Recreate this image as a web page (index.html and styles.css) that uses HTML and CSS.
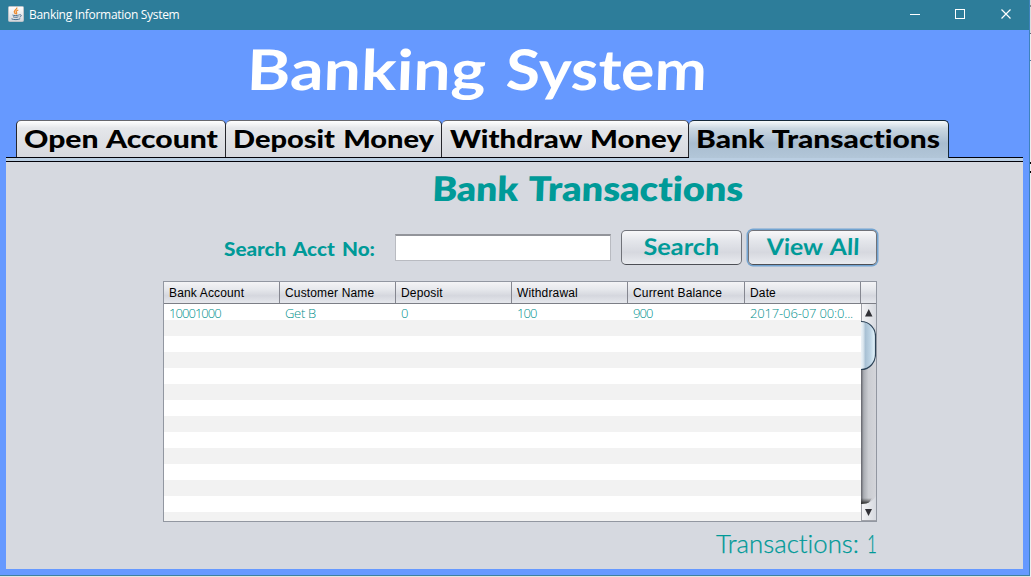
FILE: index.html
```html
<!DOCTYPE html>
<html lang="en">
<head>
<meta charset="utf-8">
<title>Banking Information System</title>
<link rel="stylesheet" href="styles.css">
</head>
<body>
<div class="desktop">
<div class="window">
  <header class="titlebar">
    <svg class="java" width="16" height="16" viewBox="0 0 16 16">
      <defs><linearGradient id="tile" x2="0" y2="1"><stop stop-color="#fff"/><stop offset="1" stop-color="#d3d7dc"/></linearGradient></defs>
      <rect x=".5" y=".5" width="15" height="15" rx="1" fill="url(#tile)" stroke="#b9c3c9"/>
      <path d="M8.8 1.5C9.5 3.5 5 4.5 6.5 6.6L7.6 8M10.3 4C7.7 5 7.8 5.8 8.6 6.7 9 7.3 8.7 7.7 8 8.2" fill="none" stroke="#ed8b2f" stroke-width="1.3"/>
      <path d="M4.5 9C5.7 9.8 9 9.6 10.8 9M5.1 10.8C6.700 11.500 9 11.400 10.400 10.800M3.500 12.800C5.500 14 10.500 13.800 12.200 12.700M11.300 8.800C14 8.300 13.800 10.600 11.600 11" fill="none" stroke="#496f8f"/>
    </svg>
    <span class="caption">Banking Information System</span>
    <svg class="controls" width="102" height="12" viewBox="0 0 102 12" fill="none" stroke="#fff">
      <path d="M0 6.500H10M45.500 1.500H54.500V10.500H45.500Z" shape-rendering="crispEdges"/>
      <path d="M91.500 1.500L100.500 10.500M100.500 1.500L91.500 10.500" stroke-width="1.200"/>
    </svg>
  </header>
  <main class="frame">
    <h1 class="banner"><svg width="470" height="70"><g class="display title"><text x="11" y="50" textLength="239" lengthAdjust="spacingAndGlyphs">Banking</text> <text x="270" y="50" textLength="201" lengthAdjust="spacingAndGlyphs">System</text></g></svg></h1>
    <nav class="tabs">
      <div class="tab t1"><svg width="210" height="36"><text class="display tabtext" x="7" y="27" textLength="194" lengthAdjust="spacingAndGlyphs">Open Account</text></svg></div>
      <div class="tab t2"><svg width="216" height="36"><text class="display tabtext" x="7" y="27" textLength="201" lengthAdjust="spacingAndGlyphs">Deposit Money</text></svg></div>
      <div class="tab t3"><svg width="247" height="36"><text class="display tabtext" x="8" y="27" textLength="232" lengthAdjust="spacingAndGlyphs">Withdraw Money</text></svg></div>
      <div class="tab t4 selected"><svg width="259" height="36"><text class="display tabtext" x="7" y="27" textLength="244" lengthAdjust="spacingAndGlyphs">Bank Transactions</text></svg></div>
    </nav>
    <section class="panel">
      <h2 class="heading"><svg width="320" height="42"><g class="display subtitle"><text x="4" y="31" textLength="86" lengthAdjust="spacingAndGlyphs">Bank</text> <text x="100" y="31" textLength="215" lengthAdjust="spacingAndGlyphs">Transactions</text></g></svg></h2>
      <div class="search">
        <svg class="label" width="155" height="30"><text class="display labeltext" x="1" y="21" textLength="151" lengthAdjust="spacingAndGlyphs">Search Acct No:</text></svg>
        <input class="field" type="text" aria-label="Account number">
        <button class="btn find"><svg width="119" height="33"><text class="display btntext" x="21" y="24" textLength="76" lengthAdjust="spacingAndGlyphs">Search</text></svg></button>
        <button class="btn all"><svg width="127" height="33"><text class="display btntext" x="17" y="24" textLength="93" lengthAdjust="spacingAndGlyphs">View All</text></svg></button>
      </div>
      <div class="table">
        <div class="row head"><span>Bank Account</span><span>Customer Name</span><span>Deposit</span><span>Withdrawal</span><span>Current Balance</span><span>Date</span><i></i></div>
        <div class="content">
          <div class="rows"><div class="row data"><span>10001000</span><span class="name">Get B</span><span>0</span><span>100</span><span>900</span><span class="date">2017-06-07 00:0...</span></div></div>
          <svg class="scroll" width="15" height="217" viewBox="0 0 15 217">
            <defs>
              <linearGradient id="track"><stop stop-color="#606168"/><stop offset=".18" stop-color="#aaadb3"/><stop offset=".5" stop-color="#cbcdd2"/><stop offset="1" stop-color="#d4d5da"/></linearGradient>
              <linearGradient id="thumb"><stop stop-color="#f4f8fb"/><stop offset=".2" stop-color="#dce7ef"/><stop offset=".35" stop-color="#a9c1d4"/><stop offset=".65" stop-color="#bcd3e4"/><stop offset="1" stop-color="#e8f8ff"/></linearGradient>
              <linearGradient id="end"><stop stop-color="#f5f5f7"/><stop offset="1" stop-color="#d7dae0"/></linearGradient>
              <linearGradient id="shade" x2="0" y2="1"><stop stop-color="#333" stop-opacity="0"/><stop offset="1" stop-color="#222"/></linearGradient>
            </defs>
            <path d="M0 0H15V217H0Z" fill="url(#track)"/>
            <path d="M0 0H15V24L0 18Z" fill="url(#end)"/>
            <path d="M4 12.500H11.500L7.750 5Z" fill="#303036"/>
            <path d="M-1 17.500H0C9 17.500 14.500 25 14.500 32V50C14.500 58 9 65.500 0 65.500H-1Z" fill="url(#thumb)" stroke="#2c4256" stroke-width="1.200"/>
            <path d="M0 194H11L7 200H0Z" fill="url(#shade)"/>
            <path d="M0 200C8 200 12 197 15 192V217H0Z" fill="url(#end)"/>
            <path d="M4 205H11L7.500 212Z" fill="#303036"/>
            <path d="M.5 0V17M.5 200V217M0 216.500H15" stroke="#a0a2a9"/>
          </svg>
        </div>
      </div>
      <div class="summary"><svg width="170" height="34"><text class="display count" x="7" y="24" textLength="143" lengthAdjust="spacingAndGlyphs">Transactions:</text> <text class="display count" x="158" y="24" textLength="10" lengthAdjust="spacingAndGlyphs">1</text></svg></div>
    </section>
  </main>
</div>
<aside class="edge"></aside>
</div>
</body>
</html>
```
FILE: styles.css
```css
* { box-sizing: border-box; }
body { margin: 0; background: #e4e4e4; overflow: hidden; }
.desktop { display: flex; width: 1031px; height: 577px; }
.window { width: 1030px; height: 576px; background: #69f; border-right: 1px solid #3d81bd; border-bottom: 1px solid #3d819f; }
.edge { width: 1px; height: 577px; background: linear-gradient(#d8d8d8 0 5px, #888 5px 7px, #ddd 7px 33px, #667 33px 34px, #eee 34px 60px, #57779c 60px 61px, #eee 61px 162px, #000 162px 164px, #eee 164px 171px, #000 171px 173px, #eee 173px); }
.titlebar { display: flex; align-items: center; height: 30px; padding: 0 17px 2px 8px; background: #2d7d9a; color: #fff; }
.caption { margin: 2px 0 0 5px; font: 12px/18px "Open Sans", sans-serif; letter-spacing: -.3px; }
.controls { margin-left: auto; }
svg { display: block; overflow: visible; }
.scroll { overflow: hidden; }
h1, h2 { margin: 0; }
.display { font-family: Lato, sans-serif; font-variant-ligatures: none; }
.frame { display: flex; flex-direction: column; height: 545px; padding: 0 6px 6px; }
.banner { height: 90px; padding: 10px 0 0 229px; }
.title { font-size: 56px; font-weight: 700; fill: #fff; transform: translateX(2px) skewX(-2deg); }
.tabs { display: flex; height: 42px; padding-left: 10px; background: linear-gradient(transparent 0 37px, #02020a 37px 38px, #bacee2 38px 41px, #02020a 41px); }
.tab { height: 37px; border: 1px solid #25262c; border-top-color: #66676d; border-bottom: 0; border-left-width: 0; border-radius: 5px 5px 0 0; background: linear-gradient(#fff, #e5e7ea 20%, #d6d8df); }
.t1 { width: 210px; border-left-width: 1px; }
.t2 { width: 216px; }
.t3 { width: 247px; }
.t4 { width: 260px; }
.selected { height: 38px; border-color: #152a3b; background: linear-gradient(#f6fafc, #cbd8e2 20%, #a9bdd0 60%, #b2c6d8); }
.tabtext { font-size: 24px; font-weight: 900; fill: #000; word-spacing: 1px; }
.panel { flex: 1; background: #d6d9e0; }
.heading { height: 67px; padding: 8px 0 0 422px; }
.subtitle { font-size: 34px; font-weight: 800; fill: #009a98; transform: translateX(1px) skewX(-2deg); }
.search { display: flex; height: 37px; padding-left: 217px; }
.label { margin-top: 6px; }
.labeltext { font-size: 18px; font-weight: 900; fill: #009a98; word-spacing: 2px; }
.field { width: 216px; height: 27px; margin: 5px 0 0 17px; padding: 0 5px; border: 1px solid #b9bbc1; border-top: 2px solid #92949a; background: #fff; }
.btn { height: 35px; margin: 1px 0 0; padding: 0; border: 1px solid #707279; border-bottom-color: #4d4f55; border-radius: 5px; background: linear-gradient(#f8f8fa, #e4e6eb 30%, #d6d8df 65%, #e9ebef); }
.find { width: 121px; margin-left: 10px; }
.all { width: 129px; margin-left: 6px; box-shadow: 0 0 0 1.5px #73a4d1; }
.btntext { font-size: 23px; font-weight: 700; fill: #009a98; word-spacing: 2px; transform: translateX(1px) skewX(-2deg); }
.table { width: 714px; height: 241px; margin: 15px 0 0 157px; border: 1px solid #9297a1; background: #fff; }
.row { display: grid; grid-template-columns: repeat(4, 116px) 117px 116px 15px; }
.row span { padding-left: 5px; white-space: nowrap; }
.head { height: 22px; border-bottom: 1px solid #7c7e86; background: linear-gradient(#f4f4f6, #e6e8ec 35%, #d5d7de 65%, #e5e7ec); font: 12px/23px "Liberation Sans", sans-serif; letter-spacing: .15px; color: #000; }
.head span { height: 21px; border-right: 1px solid #858790; }
.content { display: flex; height: 217px; }
.rows { width: 697px; background: repeating-linear-gradient(#fff 0 16px, #f2f2f2 16px 32px); }
.data { font: 300 13px/18px "Open Sans", sans-serif; letter-spacing: -.95px; color: #008f8d; }
.data .name { letter-spacing: -.3px; }
.data .date { letter-spacing: -.15px; }
.summary { height: 35px; padding: 7px 0 0 703px; }
.count { font-size: 25px; font-weight: 300; fill: #009a98; stroke: #009a98; stroke-width: .25px; }
```
